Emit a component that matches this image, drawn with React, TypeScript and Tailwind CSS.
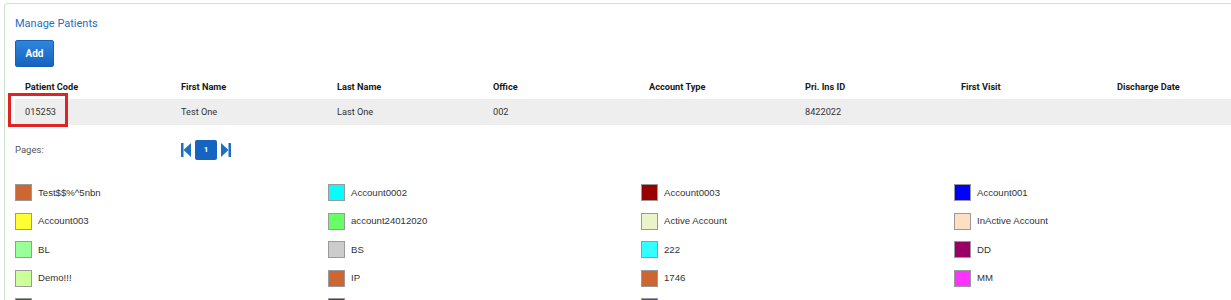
import React from "react";

const columns = [
  "Patient Code",
  "First Name",
  "Last Name",
  "Office",
  "Account Type",
  "Pri. Ins ID",
  "First Visit",
  "Discharge Date",
];

const patients = [
  {
    code: "015253",
    first: "Test One",
    last: "Last One",
    office: "002",
    accountType: "",
    insId: "8422022",
    firstVisit: "",
    discharge: "",
  },
];

const accountTypes = [
  { name: "Test$$%^5nbn", color: "#cc6633" },
  { name: "Account0002", color: "#00ffff" },
  { name: "Account0003", color: "#990000" },
  { name: "Account001", color: "#0000ff" },
  { name: "Account003", color: "#ffff33" },
  { name: "account24012020", color: "#66ff66" },
  { name: "Active Account", color: "#e9f4c9" },
  { name: "InActive Account", color: "#ffdfc2" },
  { name: "BL", color: "#99ff99" },
  { name: "BS", color: "#cccccc" },
  { name: "222", color: "#33ffff" },
  { name: "DD", color: "#990066" },
  { name: "Demo!!!", color: "#ccff99" },
  { name: "IP", color: "#cc6633" },
  { name: "1746", color: "#cc6633" },
  { name: "MM", color: "#ff33ff" },
  // next row sits under the fold, only the swatch tops show
  { name: "", color: "#3d5c33" },
  { name: "", color: "#4d3d4d" },
  { name: "", color: "#4d4d80" },
];

function FirstIcon() {
  return (
    <svg width="10" height="14" viewBox="0 0 10 14">
      <rect x="0" y="0" width="2.5" height="14" fill="#1e6fc4" />
      <polygon points="10,0 2.5,7 10,14" fill="#1e6fc4" />
    </svg>
  );
}

function LastIcon() {
  return (
    <svg width="10" height="14" viewBox="0 0 10 14">
      <polygon points="0,0 7.5,7 0,14" fill="#1e6fc4" />
      <rect x="7.5" y="0" width="2.5" height="14" fill="#1e6fc4" />
    </svg>
  );
}

export default function App() {
  return (
    <div className="h-[300px] w-full overflow-hidden bg-white pl-[4px] pt-[3px]">
      <div className="w-[1280px] min-h-[320px] rounded-tl-[4px] border-l border-t border-[#c9e5c9] bg-white pl-[10px] pt-[13px] font-['Roboto',sans-serif]">
        <h2 className="h-[14px] text-[11px] leading-[14px] text-[#1f6fc0]">
          Manage Patients
        </h2>

        <button className="mt-[9px] h-[27px] w-[39px] rounded-[2px] border border-[#1660b8] bg-gradient-to-b from-[#2f86dc] to-[#1563c0] text-[10px] font-bold text-white">
          Add
        </button>

        <table className="relative mt-[7px] table-fixed border-collapse text-[9.2px]">
          <thead>
            <tr className="h-[25px]">
              {columns.map((c) => (
                <th
                  key={c}
                  className="w-[156px] pl-[10px] text-left font-bold text-[#1a1a1a]"
                >
                  {c}
                </th>
              ))}
            </tr>
          </thead>
          <tbody>
            {patients.map((p) => (
              <tr
                key={p.code}
                className="h-[26px] border-b border-dashed border-white bg-[#eeeeee] text-[#333333]"
              >
                <td className="relative pl-[10px]">
                  {p.code}
                  <span className="absolute left-[-7px] top-[-6px] h-[34px] w-[60px] border-[3px] border-[#e02424]" />
                </td>
                <td className="pl-[10px]">{p.first}</td>
                <td className="pl-[10px]">{p.last}</td>
                <td className="pl-[10px]">{p.office}</td>
                <td className="pl-[10px]">{p.accountType}</td>
                <td className="pl-[10px]">{p.insId}</td>
                <td className="pl-[10px]">{p.firstVisit}</td>
                <td className="pl-[10px]">{p.discharge}</td>
              </tr>
            ))}
          </tbody>
        </table>

        <div className="mt-[14px] flex h-[20px] items-center">
          <span className="w-[166px] pt-[1px] text-[9.5px] text-[#555555]">Pages:</span>
          <div className="flex items-center gap-[4px]">
            <FirstIcon />
            <span className="flex h-[20px] w-[22px] items-center justify-center rounded-[2px] bg-[#1565c0] text-[8px] font-bold text-white">
              1
            </span>
            <LastIcon />
          </div>
        </div>

        <div className="mt-[19px] grid w-[1252px] grid-cols-4 font-['Liberation_Sans',Arial,sans-serif]">
          {accountTypes.map((a, i) => (
            <div key={i} className="flex h-[28.5px] items-center gap-[6px]">
              <span
                className="h-[17px] w-[17px] border border-[#9a9a9a]"
                style={{ backgroundColor: a.color }}
              />
              {a.name && (
                <span className="text-[9.6px] text-[#333333]">{a.name}</span>
              )}
            </div>
          ))}
        </div>
      </div>
    </div>
  );
}
